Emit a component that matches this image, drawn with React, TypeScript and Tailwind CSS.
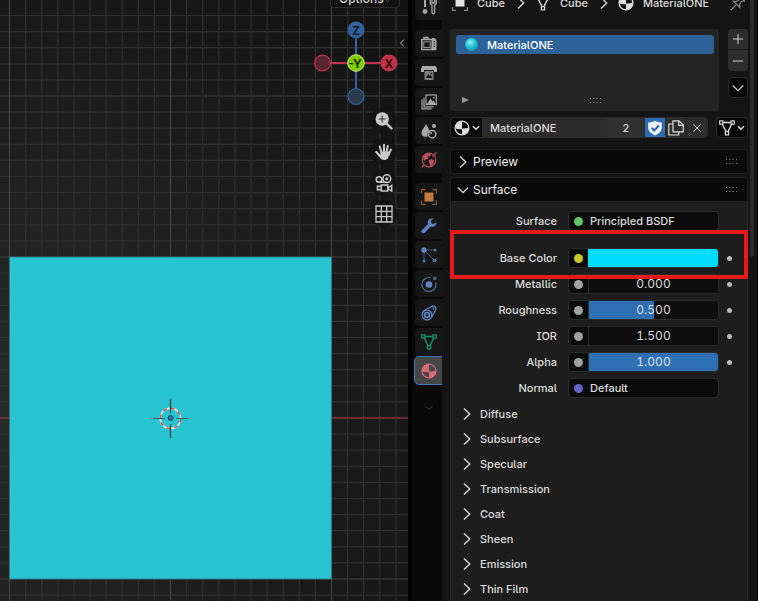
import { useState, type ReactNode } from 'react';
import { ChevronDown, ChevronLeft, Minus, Plus, X } from 'lucide-react';

/* ---------- icons ---------- */

function Svg({ children, className = '' }: { children: ReactNode; className?: string }) {
  return (
    <svg viewBox="0 0 16 16" className={`h-4 w-4 shrink-0 ${className}`} aria-hidden="true">
      {children}
    </svg>
  );
}

const stroke = { fill: 'none', stroke: 'currentColor', strokeWidth: 1.2 } as const;

const ArrowRight = ({ className = '' }: { className?: string }) => (
  <Svg className={className}>
    <path d="M5 2.500 10.800 8 5 13.500" {...stroke} strokeWidth={1.300} />
  </Svg>
);

const ArrowDown = ({ className = '' }: { className?: string }) => (
  <Svg className={className}>
    <path d="M2.800 5.500 8 10.700l5.200-5.200" {...stroke} strokeWidth={1.300} />
  </Svg>
);

const SmallArrow = () => (
  <svg viewBox="0 0 8 6" className="h-[6px] w-2 shrink-0" aria-hidden="true">
    <path d="m1 1.200 3 3 3-3" fill="none" stroke="currentColor" strokeWidth="1.500" />
  </svg>
);

const ToolIcon = () => (
  <Svg>
    <path d="M3 0h2v8H3z" fill="currentColor" />
    <circle cx="4" cy="12.500" r="2.400" fill="currentColor" />
    <path d="M9.300 1v3.200a2.500 2.500 0 0 0 1.700 2v7.300a1.300 1.300 0 0 0 2.600 0V6.200a2.500 2.500 0 0 0 1.700-2V1M11 0v4h2.600V0" {...stroke} strokeWidth={1.300} />
  </Svg>
);

const RenderIcon = () => (
  <Svg>
    <path d="M3 3V1.500h4V3M.8 3.600h10.400v10H.8z" {...stroke} strokeWidth={1.500} />
    <rect x="2.800" y="5.800" width="6.400" height="5.600" {...stroke} strokeWidth={0.9} />
    <path d="M11 2h2.500l2 2v10.300H11z" fill="currentColor" />
    <path d="M12.500 5.500h1.500M12.500 8h1.500M12.500 10.500h1.500" stroke="#181818" />
  </Svg>
);

const OutputIcon = () => (
  <Svg>
    <path d="M1.500 1h13L16 3.500V7h-3V5H3v2H0V3.500z" fill="currentColor" />
    <path d="M3.500 6h9v9h-9z" fill="currentColor" opacity="0.7" />
    <path d="m5 13 2.300-4 1.500 2 1-1L11.500 13z" fill="#181818" />
    <circle cx="10.300" cy="8.500" r=".8" fill="#181818" />
  </Svg>
);

const ViewLayerIcon = () => (
  <Svg>
    <rect x="5" y="1" width="10.300" height="9.500" {...stroke} />
    <path d="M3 3.500v9.300h9.500M1 5.500v9.300h9.500" {...stroke} />
    <path d="m6 10 3.500-5.500 2 3L12.500 6.500 14.500 10z" fill="currentColor" />
    <circle cx="12.800" cy="3.700" r=".9" fill="currentColor" />
  </Svg>
);

const SceneIcon = () => (
  <Svg>
    <path d="M5 1c1 2.500 3 4.500 3.700 7C7 8.500 6.200 10 6.500 13.500 3 14.500.500 13 .5 10 .5 7 3.800 4.500 5 1z" fill="currentColor" />
    <circle cx="13" cy="3" r="2" fill="currentColor" />
    <circle cx="11.200" cy="11.200" r="3.700" {...stroke} strokeWidth={1.500} />
    <circle cx="10" cy="10" r="1" fill="currentColor" />
  </Svg>
);

const WorldIcon = () => (
  <Svg>
    <circle cx="8" cy="8" r="6.800" {...stroke} />
    <path d="M2.500 4.500C4 2.300 6.500 1.300 9 1.600l1 1.400-1.500 1.500-1.500-.3.3 2-1.800 1.500-1.500-.5L4 9 2.200 7.500zM8 8l2.500-1 2.700 1.500-.7 3-2 2.700-1.500-.2-.3-2.500L7.500 10zM11 3l2.500 2-1.500.5z" fill="currentColor" />
    <path d="M.5 15.500l2.500-2.500M13 3l2.500-2.500" {...stroke} />
  </Svg>
);

const ObjectIcon = () => (
  <Svg>
    <rect x="3.500" y="3.500" width="9" height="9" fill="currentColor" />
    <path d="M.600 4.500V.600H4.500M11.500 .600h3.900V4.500M15.400 11.500v3.900H11.500M4.500 15.400H.600V11.500" {...stroke} opacity="0.7" />
  </Svg>
);

const WrenchIcon = () => (
  <Svg>
    <path
      d="M15.300 4.200 12.600 6 10.300 5.200 9.900 3 12.300.800C10 .1 7.300 1.200 6.800 3.800c-.1.900 0 1.600.3 2.300L.9 12.200c-.8.900-.7 2 .1 2.700.8.700 1.900.6 2.700-.2l6-6.200c3.200 1.200 6-1 5.600-4.300z"
      fill="currentColor"
    />
  </Svg>
);

const ParticlesIcon = () => (
  <Svg>
    <path d="M3 3l10 10M3 3h10M3 3v10" stroke="currentColor" strokeWidth=".9" opacity="0.7" />
    <circle cx="3" cy="3" r="2.700" fill="currentColor" />
    <g fill="currentColor" opacity="0.8">
      <circle cx="14" cy="3" r="1.500" />
      <circle cx="3" cy="14" r="1.500" />
      <circle cx="13.500" cy="13.500" r="1.900" />
    </g>
  </Svg>
);

const PhysicsIcon = () => (
  <Svg>
    <circle cx="8" cy="8.500" r="3.300" fill="currentColor" />
    <path d="M9.500 1.700A7 7 0 1 0 14.600 6.500" {...stroke} opacity="0.8" />
    <circle cx="13.800" cy="2.300" r="1.900" fill="currentColor" opacity="0.7" />
  </Svg>
);

const ConstraintIcon = () => (
  <Svg>
    <path d="M1.800 6.500 10.500 1.500c3-1.500 5.300 1 4 3.700L10.300 12.500" {...stroke} strokeWidth={1.300} />
    <circle cx="6" cy="10" r="4.900" {...stroke} strokeWidth={1.300} />
    <circle cx="6" cy="10" r="2.300" {...stroke} strokeWidth={1.800} />
    <circle cx="12.500" cy="3.500" r="1" fill="currentColor" />
  </Svg>
);

const MeshIcon = ({ className = '' }: { className?: string }) => (
  <Svg className={className}>
    <path d="M4 2.500h8M3.200 4l3.800 7.500M12.800 4 9 11.500" {...stroke} strokeWidth={1.400} />
    <rect x=".7" y=".9" width="3.200" height="3.200" {...stroke} />
    <rect x="12.100" y=".9" width="3.200" height="3.200" {...stroke} />
    <rect x="6.400" y="11.700" width="3.200" height="3.200" {...stroke} />
  </Svg>
);

const MaterialIcon = ({ className = '' }: { className?: string }) => (
  <Svg className={className}>
    <circle cx="8" cy="8" r="6.900" {...stroke} strokeWidth={1.300} />
    <path d="M8 8V1.100A6.900 6.900 0 0 0 1.100 8c2 1.300 4.500 1.500 6.900 1.300zM8 8.600c2.500 0 5-.3 6.900-1.300A7 7 0 0 1 8 15z" fill="currentColor" />
  </Svg>
);

const ShieldIcon = () => (
  <Svg>
    <path d="M8 .500c2 1.500 4.500 2 6.800 2v5.300c0 3.800-3.500 6.200-6.800 7.700C4.700 14 1.200 11.600 1.200 7.800V2.500C3.500 2.500 6 2 8 .500z" fill="#f0f4f8" />
    <path d="m4.500 7.800 2.700 2.700 4.600-5" fill="none" stroke="#2c6bb0" strokeWidth="2" />
  </Svg>
);

const DuplicateIcon = () => (
  <Svg>
    <path d="M5 .800h6L15.300 5v6.800H5zM10.700 .800v4.500h4.600M5 4H.800v11h9.900v-3" {...stroke} />
  </Svg>
);

const PinIcon = () => (
  <Svg>
    <path d="M.8 15.200 6 10M9.500 1l5.500 5.500M10.300 1.800 9.500 4.500 6.500 6.500l-3-.3 6.300 6.300-.3-3 2-3 2.700-.8" {...stroke} />
  </Svg>
);

const Grip = () => (
  <svg viewBox="0 0 11 5" className="h-[5px] w-[11px] text-[#8a8a8a]" aria-hidden="true">
    <path d="M0 .5h11M0 4.500h11" stroke="currentColor" strokeDasharray="1 2.300" />
  </svg>
);

/* ---------- viewport ---------- */

const CELL = 16.1;
const ORIGIN = { x: 170.5, y: 418 };
const steps = Array.from({ length: 121 }, (_, i) => i - 26);

function Scene() {
  return (
    <svg className="block h-full w-full" aria-label="3D viewport" role="img">
      <defs>
        <radialGradient id="bg" gradientUnits="userSpaceOnUse" cx="0" cy="400" r="520">
          <stop offset="0" stopColor="#292929" />
          <stop offset="1" stopColor="#131313" />
        </radialGradient>
      </defs>
      <rect width="100%" height="100%" fill="url(#bg)" />
      {steps.map((i) => {
        const x = ORIGIN.x + i * CELL;
        const y = ORIGIN.y + i * CELL;
        const color = i % 10 === 0 ? '#434343' : '#303030';
        return (
          <g key={i} stroke={color} strokeWidth="1.200">
            <line x1={x} x2={x} y1="0" y2="100%" />
            <line x1="0" x2="100%" y1={y} y2={y} />
          </g>
        );
      })}
      <line x1="0" x2="100%" y1="418" y2="418" stroke="#7e303a" strokeWidth="1.600" />

      <rect x="9.500" y="257" width="322" height="322" fill="#29c4d1" stroke="#27707a" strokeWidth=".8" />

      {/* 3D cursor */}
      <g fill="none">
        <circle cx="170.500" cy="418.500" r="10.200" stroke="#f4f4f4" strokeWidth="1.400" />
        <circle cx="170.500" cy="418.500" r="10.200" stroke="#f0403c" strokeWidth="1.400" strokeDasharray="4 4" />
        <path d="M170.500 399v14M170.500 424v14" stroke="#123c44" strokeWidth="1.200" />
        <path d="M153 418.500h12M176 418.500h12" stroke="#2a6a72" strokeWidth="1.200" />
        <path d="M150 418.500h3M188 418.500h3" stroke="#b67a80" />
        <circle cx="170.500" cy="418" r="2.500" fill="#2f78c0" stroke="#173a55" />
      </g>
    </svg>
  );
}

function Gizmo() {
  return (
    <svg viewBox="0 0 86 86" className="h-[86px] w-[86px] font-bold" fontSize="12" textAnchor="middle">
      <path d="M43 17v60" stroke="#33619a" strokeWidth="2" />
      <path d="M18 43h50" stroke="#c0324a" strokeWidth="2" />
      <circle cx="43" cy="10" r="8.500" fill="#33619a" />
      <circle cx="43" cy="76.500" r="7.900" fill="#2a3a4c" stroke="#33619a" strokeWidth="1.300" />
      <circle cx="9.500" cy="43" r="7.900" fill="#58262f" stroke="#c0324a" strokeWidth="1.300" />
      <circle cx="76" cy="43" r="8.500" fill="#c0324a" />
      <circle cx="43" cy="43" r="8.300" fill="#80cc00" stroke="#c2ec7c" />
      <text x="43" y="14.500" fill="#101c2c">Z</text>
      <text x="76" y="47.500" fill="#3a0c14">X</text>
      <text x="42" y="47.500" fill="#1c3000">-Y</text>
    </svg>
  );
}

const navButtons: { label: string; icon: ReactNode }[] = [
  {
    label: 'Zoom',
    icon: (
      <svg viewBox="0 0 18 18" className="h-[18px] w-[18px]">
        <path d="m11 11 5.500 5.500" stroke="#c9c9c9" strokeWidth="2.400" strokeLinecap="round" />
        <circle cx="7.200" cy="7" r="6.700" fill="#c9c9c9" />
        <path d="M7.200 3.500v7M3.700 7h7" stroke="#333" strokeWidth="1.200" />
      </svg>
    ),
  },
  {
    label: 'Pan',
    icon: (
      <svg viewBox="0 0 18 18" className="h-[18px] w-[18px]" fill="none" stroke="#c9c9c9" strokeLinecap="round">
        <path d="m6.500 10-1.700-6.500M9 9V1.800M11.500 10l1.200-7M13.500 12l2.300-5.500" strokeWidth="2" />
        <path d="M5 13 1.300 9" strokeWidth="2.200" />
        <path d="M5.700 8.500h7.500l1.600 1-1.300 4.500c-.8 2.300-2 3-4 3-2.300 0-4-1-5.300-3.500L2.500 11l3.200.5z" fill="#c9c9c9" stroke="none" />
      </svg>
    ),
  },
  {
    label: 'Camera view',
    icon: (
      <svg viewBox="0 0 18 18" className="h-[18px] w-[18px]" fill="none" stroke="#c9c9c9" strokeWidth="1.500">
        <circle cx="4" cy="5.500" r="2.800" />
        <circle cx="11.800" cy="4.700" r="3.900" />
        <circle cx="11.800" cy="4.700" r=".8" />
        <path d="M3.500 8.300h9M6.300 11h6.500v6H6.300zM13 14l3.700-2.500v5.500L13 14.500M6 12.500 2.500 12v4l3.500-.5" />
      </svg>
    ),
  },
  {
    label: 'Toggle orthographic',
    icon: (
      <svg viewBox="0 0 18 18" className="h-[18px] w-[18px]" fill="none" stroke="#c9c9c9" strokeWidth="1.300">
        <path d="M1 1h16v16H1zM6.300 1v16M11.700 1v16M1 6.300h16M1 11.700h16" />
      </svg>
    ),
  },
];

function Viewport() {
  return (
    <main className="relative min-w-0 flex-1 overflow-hidden bg-[#1a1a1a]">
      <Scene />
      <div className="absolute right-2 top-0 flex h-2 w-[70px] items-end justify-between overflow-hidden rounded-b border border-t-0 border-[#2d2d2d] bg-[#121212] px-2">
        <button className="text-[12px] leading-4 text-[#d0d0d0]">Options</button>
        <ChevronDown className="h-3 w-3 text-[#777]" />
      </div>
      <div className="absolute right-[9px] top-5">
        <Gizmo />
      </div>
      <button aria-label="Show sidebar" className="absolute right-0 top-[37px] text-[#bbb]">
        <ChevronLeft className="h-3 w-3" />
      </button>
      <div className="absolute right-[11px] top-[107px] flex flex-col gap-1">
        {navButtons.map((b) => (
          <button
            key={b.label}
            aria-label={b.label}
            className="flex h-[27px] w-[27px] items-center justify-center rounded-full bg-[#131313]/80"
          >
            {b.icon}
          </button>
        ))}
      </div>
    </main>
  );
}

/* ---------- editor tabs ---------- */

const sceneTabs = [
  { label: 'Render', icon: <RenderIcon /> },
  { label: 'Output', icon: <OutputIcon /> },
  { label: 'View Layer', icon: <ViewLayerIcon /> },
  { label: 'Scene', icon: <SceneIcon /> },
  { label: 'World', icon: <WorldIcon />, color: 'text-[#b8525e]' },
];

const objectTabs = [
  { label: 'Object', icon: <ObjectIcon />, color: 'text-[#c07a42]' },
  { label: 'Modifiers', icon: <WrenchIcon />, color: 'text-[#5d86c0]' },
  { label: 'Particles', icon: <ParticlesIcon />, color: 'text-[#5d86c0]' },
  { label: 'Physics', icon: <PhysicsIcon />, color: 'text-[#5d86c0]' },
  { label: 'Constraints', icon: <ConstraintIcon />, color: 'text-[#5d86c0]' },
  { label: 'Data', icon: <MeshIcon />, color: 'text-[#0f9a6a]' },
  { label: 'Material', icon: <MaterialIcon />, color: 'text-[#d86a76]', active: true },
];

function Tab({ label, icon, color = 'text-[#a8a8a8]', active = false }: {
  label: string;
  icon: ReactNode;
  color?: string;
  active?: boolean;
}) {
  return (
    <button
      role="tab"
      aria-label={label}
      aria-selected={active}
      className={`flex h-[27px] w-full shrink-0 items-center justify-center rounded-l ${color} ${
        active ? 'bg-[#464646] outline outline-1 outline-[#3a7cc4]' : 'bg-[#161616]'
      }`}
    >
      {icon}
    </button>
  );
}

function EditorTabs() {
  return (
    <div role="tablist" aria-orientation="vertical" className="flex w-[30px] shrink-0 flex-col items-center overflow-hidden bg-[#090909] pl-[3px]">
      <div className="flex h-5 w-full flex-col justify-end overflow-hidden">
        <Tab label="Tool" icon={<ToolIcon />} />
      </div>
      <div className="mt-[10px] flex w-full flex-col gap-0.5">
        {sceneTabs.map((t) => (
          <Tab key={t.label} {...t} />
        ))}
      </div>
      <div className="mt-[10px] flex w-full flex-col gap-0.5">
        {objectTabs.map((t) => (
          <Tab key={t.label} {...t} />
        ))}
      </div>
      <ChevronDown className="mt-[18px] h-3 w-3 text-[#4a4a4a]" />
    </div>
  );
}

/* ---------- properties ---------- */

function Breadcrumb() {
  return (
    <nav aria-label="Context" className="flex h-4 items-end overflow-hidden">
      <div className="flex h-[26px] w-full items-center pl-0.5 pr-0.5">
        <Svg>
          <rect x="3.500" y="3.500" width="9" height="8" fill="#e4e4e4" />
          <path d="M.600 12v3.400H4M12 15.400h3.400V12" stroke="#a0a0a0" fill="none" />
        </Svg>
        <span className="ml-[9px]">Cube</span>
        <ArrowRight className="ml-2" />
        <MeshIcon className="ml-1.5" />
        <span className="ml-[9px]">Cube</span>
        <ArrowRight className="ml-2" />
        <MaterialIcon className="ml-1.5" />
        <span className="ml-[9px]">MaterialONE</span>
        <button aria-label="Pin" className="ml-auto text-[#8a8a8a]">
          <PinIcon />
        </button>
      </div>
    </nav>
  );
}

function MaterialSlots() {
  return (
    <div className="mt-[13px] flex gap-[9px]">
      <div className="flex h-[82px] flex-1 flex-col rounded bg-[#242424] py-1.5 pl-1.5 pr-[5px]">
        <button className="flex h-[19px] items-center rounded-[3px] bg-[#2d6299] text-white">
          <span className="ml-[9px] h-[13px] w-[13px] rounded-full bg-[radial-gradient(circle_at_40%_35%,#8df0f4,#1cc0d0_45%,#0b7f8e)]" />
          <span className="ml-[9px]">MaterialONE</span>
        </button>
        <div className="mt-auto flex h-2.5 items-center pl-1.5">
          <button aria-label="Show filter" className="text-[#9a9a9a]">
            <svg viewBox="0 0 7 6" className="h-[6px] w-[7px]">
              <path d="M0 0l7 3-7 3z" fill="currentColor" />
            </svg>
          </button>
          <div className="flex flex-1 justify-center pl-2">
            <Grip />
          </div>
        </div>
      </div>
      <div className="flex w-5 flex-col text-[#d0d0d0]">
        <button aria-label="Add slot" className="flex h-[21px] items-center justify-center rounded-t border-b border-[#1c1c1c] bg-[#2d2d2d]">
          <Plus className="h-4 w-4" strokeWidth={1.5} />
        </button>
        <button aria-label="Remove slot" className="flex h-[21px] items-center justify-center rounded-b bg-[#2d2d2d]">
          <Minus className="h-4 w-4" strokeWidth={1.5} />
        </button>
        <button aria-label="Slot menu" className="mt-1.5 flex h-[21px] items-center justify-center rounded border border-[#2a2a2a] bg-[#080808]">
          <ArrowDown />
        </button>
      </div>
    </div>
  );
}

function MaterialPicker() {
  const [name, setName] = useState('MaterialONE');
  return (
    <div className="mt-1.5 flex h-[21px] gap-2">
      <div className="flex min-w-0 flex-1 overflow-hidden rounded border border-[#2a2a2a] bg-[#2c2c2c]">
        <button aria-label="Browse material" className="flex w-[31px] shrink-0 items-center justify-center gap-0.5 bg-[#0a0a0a]">
          <MaterialIcon />
          <SmallArrow />
        </button>
        <input
          aria-label="Material name"
          value={name}
          onChange={(e) => setName(e.target.value)}
          className="min-w-0 flex-1 bg-transparent pl-2 outline-none"
        />
        <button className="w-[38px] bg-[#303030]">2</button>
        <button aria-label="Fake user" className="flex w-5 items-center justify-center bg-[#2c6bb0]">
          <ShieldIcon />
        </button>
        <button aria-label="New material" className="flex w-[22px] items-center justify-center border-r border-[#232323]">
          <DuplicateIcon />
        </button>
        <button aria-label="Unlink" className="flex w-5 items-center justify-center">
          <X className="h-3.5 w-3.5" strokeWidth={1.5} />
        </button>
      </div>
      <button aria-label="Link data" className="flex w-8 items-center justify-center gap-0.5 rounded border border-[#2a2a2a] bg-[#080808]">
        <MeshIcon />
        <SmallArrow />
      </button>
    </div>
  );
}

function PanelHeader({ label, open = false }: { label: string; open?: boolean }) {
  return (
    <button
      aria-expanded={open}
      className={`flex h-[25px] w-full items-center border border-[#1e1e1e] bg-[#0a0a0a] pl-1 pr-2.5 text-[12px] font-normal ${open ? 'rounded-t' : 'rounded'}`}
    >
      {open ? <ArrowDown /> : <ArrowRight />}
      <span className="ml-0.5 flex-1 text-left text-[#efefef]">{label}</span>
      <Grip />
    </button>
  );
}

function Row({ label, id, socket, animatable = true, children, marked = false }: {
  label: string;
  id: string;
  socket: string;
  animatable?: boolean;
  children: ReactNode;
  marked?: boolean;
}) {
  return (
    <div className="relative flex h-5 items-center">
      <label htmlFor={id} className="flex-1 pr-[11px] text-right">
        {label}
      </label>
      <div className="flex h-5 w-[151px] overflow-hidden rounded border border-[#2c2c2c] bg-[#0b0b0b]">
        <span className="flex w-[19px] shrink-0 items-center justify-center">
          <span className={`h-[9px] w-[9px] rounded-full ${socket}`} />
        </span>
        {children}
      </div>
      <span className="flex w-7 items-center pl-2">
        {animatable && <span className="h-[5px] w-[5px] rounded-full bg-[#b8b8b8]" />}
      </span>
      {marked && <span className="pointer-events-none absolute -inset-x-px -bottom-[11px] -top-[18px] z-10 border-4 border-[#e51a1a]" />}
    </div>
  );
}

function NumberField({ id, initial, fill = 0 }: { id: string; initial: string; fill?: number }) {
  const [value, setValue] = useState(initial);
  return (
    <span className="relative flex flex-1 border-l border-[#2c2c2c] bg-[#0e0e0e]">
      <span className="absolute inset-y-0 left-0 bg-[#2f70b4]" style={{ width: `${fill * 100}%` }} />
      <input
        id={id}
        value={value}
        onChange={(e) => setValue(e.target.value)}
        className="relative w-full min-w-0 bg-transparent text-center text-[12px] font-normal tabular-nums outline-none"
      />
    </span>
  );
}

const subpanels = ['Diffuse', 'Subsurface', 'Specular', 'Transmission', 'Coat', 'Sheen', 'Emission', 'Thin Film'];

function SurfacePanel() {
  return (
    <section className="mt-[3px] flex flex-1 flex-col">
      <PanelHeader label="Surface" open />
      <div className="flex flex-1 flex-col border-x border-[#2b2b2b] bg-[#1d1d1d] pt-[9px]">
        <Row label="Surface" id="surface" socket="bg-[#62c462]" animatable={false}>
          <button id="surface" className="flex-1 pl-0.5 text-left">Principled BSDF</button>
        </Row>
        <div className="mt-[17px] flex flex-col gap-1.5">
          <Row label="Base Color" id="base-color" socket="bg-[#c7c729]" marked>
            <button id="base-color" className="flex-1 bg-[#00dcff]" />
          </Row>
          <Row label="Metallic" id="metallic" socket="bg-[#a1a1a1]">
            <NumberField id="metallic" initial="0.000" />
          </Row>
          <Row label="Roughness" id="roughness" socket="bg-[#a1a1a1]">
            <NumberField id="roughness" initial="0.500" fill={0.5} />
          </Row>
          <Row label="IOR" id="ior" socket="bg-[#a1a1a1]">
            <NumberField id="ior" initial="1.500" />
          </Row>
          <Row label="Alpha" id="alpha" socket="bg-[#a1a1a1]">
            <NumberField id="alpha" initial="1.000" fill={1} />
          </Row>
          <Row label="Normal" id="normal" socket="bg-[#6363c7]" animatable={false}>
            <button id="normal" className="flex-1 pl-0.5 text-left">Default</button>
          </Row>
        </div>
        <div className="mt-[3px] flex flex-col">
          {subpanels.map((name) => (
            <button key={name} aria-expanded={false} className="flex h-[25px] items-center pl-2">
              <ArrowRight />
              <span className="ml-[5px]">{name}</span>
            </button>
          ))}
        </div>
      </div>
    </section>
  );
}

export default function App() {
  return (
    <div className="flex h-screen overflow-hidden bg-black font-['Inter','Liberation_Sans',sans-serif] text-[11px] font-medium leading-4 text-[#dcdcdc] [font-feature-settings:'cv05','cv08']">
      <Viewport />
      <aside className="ml-1 flex w-[346px] shrink-0 border-r border-black">
        <EditorTabs />
        <div className="flex min-w-0 flex-1 bg-[#141414] pl-2">
          <div className="flex min-w-0 flex-1 flex-col">
            <Breadcrumb />
            <MaterialSlots />
            <MaterialPicker />
            <section className="mt-[11px]">
              <PanelHeader label="Preview" />
            </section>
            <SurfacePanel />
          </div>
          <div className="ml-0.5 mr-[3px] h-[257px] w-1 rounded-b bg-[#2b2b2b]" />
        </div>
      </aside>
    </div>
  );
}
